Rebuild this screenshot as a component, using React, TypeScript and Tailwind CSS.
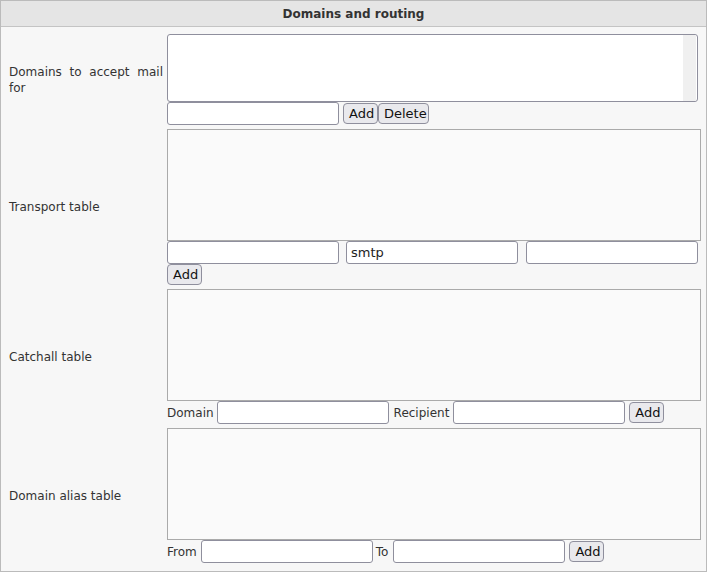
const field =
  "h-[23px] w-[172px] rounded-[3px] border border-[#8f8f9d] bg-white px-[4px] text-[13px] text-[#222] outline-none";
const btn =
  "h-[21px] rounded-[4px] border border-[#8f8f9d] bg-[#e9e9ed] px-[5px] text-[13px] leading-none text-[#111]";
const box = "h-[112px] w-[534px] border border-[#aaaaaa] bg-[#fafafa]";

function Row({ label, children }: { label: string; children: React.ReactNode }) {
  return (
    <div className="flex items-center">
      <div className="ml-[8px] mr-[4px] w-[154px] text-justify text-[12px] leading-[16px] text-[#333]">{label}</div>
      <div className="flex flex-col">{children}</div>
    </div>
  );
}

export default function App() {
  return (
    <div
      className="h-[572px] w-[707px] border border-[#bbbbbb] bg-[#f7f7f7]"
      style={{ fontFamily: '"DejaVu Sans", sans-serif' }}
    >
      <div className="flex h-[26px] items-center justify-center border-b border-[#c4c4c4] bg-[#e5e5e5] text-[12px] font-bold text-[#333]">
        Domains and routing
      </div>

      <div className="flex flex-col gap-[4px] pt-[7px]">
        <Row label="Domains to accept mail for">
          <div className="flex h-[68px] w-[531px] justify-end overflow-hidden rounded-[3px] border border-[#8f8f9d] bg-white">
            <div className="mr-[1px] h-full w-[13px] bg-[#f0f0f0]" />
          </div>
          <div className="flex items-center">
            <input className={field} />
            <button className={`${btn} ml-[4px] w-[35px]`}>Add</button>
            <button className={`${btn} w-[51px]`}>Delete</button>
          </div>
        </Row>

        <Row label="Transport table">
          <div className={box} />
          <div className="flex items-center">
            <input className={field} />
            <input className={`${field} ml-[7px]`} defaultValue="smtp" />
            <input className={`${field} ml-[8px]`} />
          </div>
          <div className="flex">
            <button className={`${btn} w-[35px]`}>Add</button>
          </div>
        </Row>

        <Row label="Catchall table">
          <div className={box} />
          <div className="flex items-center text-[12px] text-[#333]">
            <span>Domain</span>
            <input className={`${field} ml-[3px]`} />
            <span className="ml-[5px]">Recipient</span>
            <input className={`${field} ml-[4px]`} />
            <button className={`${btn} ml-[4px] w-[35px]`}>Add</button>
          </div>
        </Row>

        <Row label="Domain alias table">
          <div className={box} />
          <div className="flex items-center text-[12px] text-[#333]">
            <span>From</span>
            <input className={`${field} ml-[4px]`} />
            <span className="ml-[3px]">To</span>
            <input className={`${field} ml-[5px]`} />
            <button className={`${btn} ml-[4px] w-[35px]`}>Add</button>
          </div>
        </Row>
      </div>
    </div>
  );
}
